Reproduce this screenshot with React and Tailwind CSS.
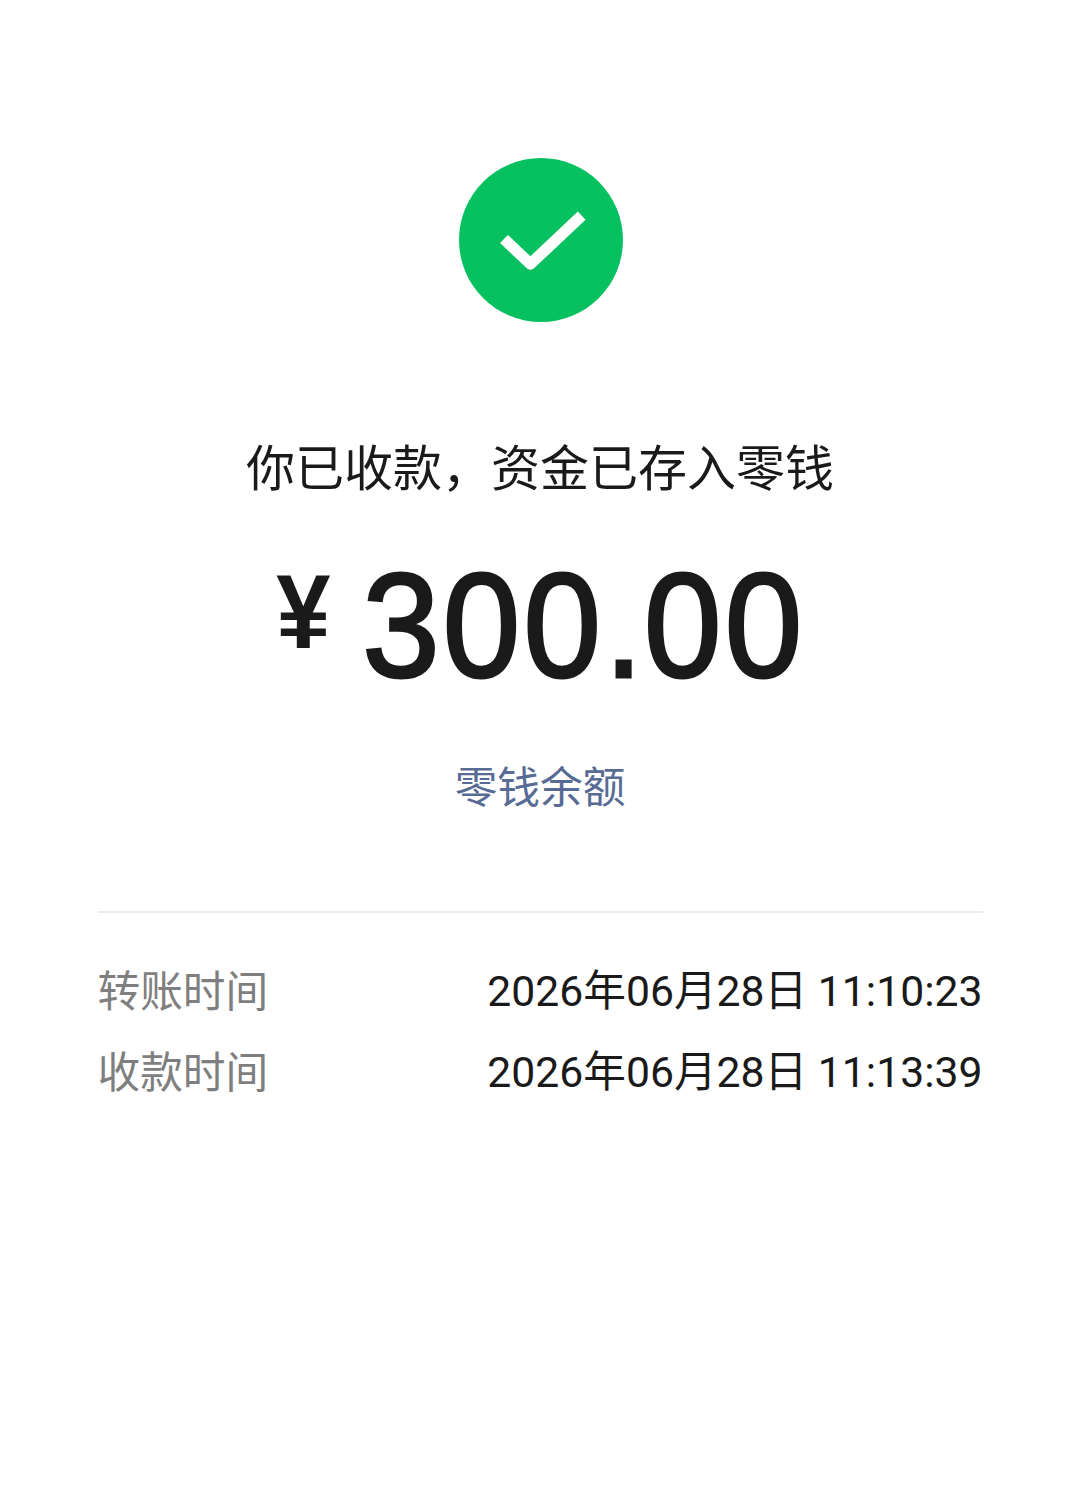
const cjk = { fontFamily: '"Noto Sans CJK SC", sans-serif' };
const roboto = { fontFamily: 'Roboto, "Noto Sans CJK SC", sans-serif' };
const lib = { fontFamily: '"Liberation Sans", sans-serif' };
function Row({ label, value }) {
  return (
    <div className="flex justify-between items-center h-[81px]">
      <span className="text-[42.7px] leading-[50px] pb-[6px] text-[#7f7f7f]" style={cjk}>{label}</span>
      <span className="text-[42.7px] leading-[56px] text-[#1a1a1a]" style={roboto}>{value}</span>
    </div>
  );
}
export default function App() {
  return (
    <div className="w-[1080px] h-[1486px] bg-white flex flex-col items-center overflow-hidden">
      <svg className="mt-[158px] ml-[2px] w-[164px] h-[164px]" viewBox="0 0 164 164">
        <circle cx="82" cy="82" r="82" fill="#07c160" />
        <path d="M45 81 L71.4 106 L122.7 57.7" fill="none" stroke="#fff" strokeWidth="11.3" strokeLinejoin="round" />
      </svg>
      <div className="mt-[113px] text-[49px] leading-[60px] text-[#1a1a1a]" style={cjk}>你已收款，资金已存入零钱</div>
      <div className="mt-[51px] ml-[13.5px] flex items-start text-[#1a1a1a]" style={lib}>
        <span className="inline-block scale-x-[0.92] text-[106px] leading-[130px] mr-[15.5px] font-bold">¥</span>
        <span className="inline-block scale-x-[0.94] text-[148px] leading-[160px] tracking-[3.5px] [-webkit-text-stroke:3px_#1a1a1a]">300<span className="tracking-[1.4px]">.</span>00</span>
      </div>
      <div className="mt-[50px] text-[42.7px] leading-[56px] text-[#576b95]" style={cjk}>零钱余额</div>
      <div className="mt-[99px] w-[885px] h-[2px] bg-[#ececec]"></div>
      <div className="w-[885px] mt-[37px]">
        <Row label="转账时间" value="2026年06月28日 11:10:23" />
        <Row label="收款时间" value="2026年06月28日 11:13:39" />
      </div>
    </div>
  );
}
